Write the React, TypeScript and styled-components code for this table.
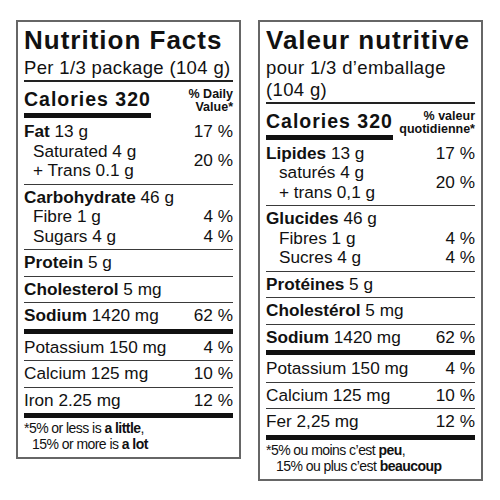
import styled, { createGlobalStyle } from "styled-components";

type Kind = "main" | "sub" | "plain";

interface Line {
  kind: Kind;
  name: string;
  amount: string;
  dv?: string;
}

interface Pair {
  kind: "pair";
  lines: [string, string];
  dv: string;
}

type Entry = Line | Pair;

interface Section {
  entries: Entry[];
  rule: "thin" | "thick";
}

interface Label {
  title: string;
  serving: string;
  dvHead: [string, string];
  sections: Section[];
  foot: [string, string, string][];
  indent: number;
  footIndent: number;
}

const EN: Label = {
  title: "Nutrition Facts",
  serving: "Per 1/3 package (104 g)",
  dvHead: ["% Daily", "Value*"],
  indent: 9,
  footIndent: 8,
  sections: [
    {
      rule: "thin",
      entries: [
        { kind: "main", name: "Fat", amount: "13 g", dv: "17 %" },
        { kind: "pair", lines: ["Saturated 4 g", "+ Trans 0.1 g"], dv: "20 %" },
      ],
    },
    {
      rule: "thin",
      entries: [
        { kind: "main", name: "Carbohydrate", amount: "46 g" },
        { kind: "sub", name: "Fibre", amount: "1 g", dv: "4 %" },
        { kind: "sub", name: "Sugars", amount: "4 g", dv: "4 %" },
      ],
    },
    { rule: "thin", entries: [{ kind: "main", name: "Protein", amount: "5 g" }] },
    { rule: "thin", entries: [{ kind: "main", name: "Cholesterol", amount: "5 mg" }] },
    {
      rule: "thick",
      entries: [{ kind: "main", name: "Sodium", amount: "1420 mg", dv: "62 %" }],
    },
    {
      rule: "thin",
      entries: [{ kind: "plain", name: "Potassium", amount: "150 mg", dv: "4 %" }],
    },
    {
      rule: "thin",
      entries: [{ kind: "plain", name: "Calcium", amount: "125 mg", dv: "10 %" }],
    },
    {
      rule: "thick",
      entries: [{ kind: "plain", name: "Iron", amount: "2.25 mg", dv: "12 %" }],
    },
  ],
  foot: [
    ["*5% or less is ", "a little", ","],
    ["15% or more is ", "a lot", ""],
  ],
};

const FR: Label = {
  title: "Valeur nutritive",
  serving: "pour 1/3 d\u2019emballage (104 g)",
  dvHead: ["% valeur", "quotidienne*"],
  indent: 13,
  footIndent: 10,
  sections: [
    {
      rule: "thin",
      entries: [
        { kind: "main", name: "Lipides", amount: "13 g", dv: "17 %" },
        { kind: "pair", lines: ["satur\u00e9s 4 g", "+ trans 0,1 g"], dv: "20 %" },
      ],
    },
    {
      rule: "thin",
      entries: [
        { kind: "main", name: "Glucides", amount: "46 g" },
        { kind: "sub", name: "Fibres", amount: "1 g", dv: "4 %" },
        { kind: "sub", name: "Sucres", amount: "4 g", dv: "4 %" },
      ],
    },
    { rule: "thin", entries: [{ kind: "main", name: "Prot\u00e9ines", amount: "5 g" }] },
    { rule: "thin", entries: [{ kind: "main", name: "Cholest\u00e9rol", amount: "5 mg" }] },
    {
      rule: "thick",
      entries: [{ kind: "main", name: "Sodium", amount: "1420 mg", dv: "62 %" }],
    },
    {
      rule: "thin",
      entries: [{ kind: "plain", name: "Potassium", amount: "150 mg", dv: "4 %" }],
    },
    {
      rule: "thin",
      entries: [{ kind: "plain", name: "Calcium", amount: "125 mg", dv: "10 %" }],
    },
    {
      rule: "thick",
      entries: [{ kind: "plain", name: "Fer", amount: "2,25 mg", dv: "12 %" }],
    },
  ],
  foot: [
    ["*5% ou moins c\u2019est ", "peu", ","],
    ["15% ou plus c\u2019est ", "beaucoup", ""],
  ],
};

export default function App() {
  return (
    <>
      <GlobalStyle />
      <Page>
        <NutritionPanel label={EN} />
        <NutritionPanel label={FR} />
      </Page>
    </>
  );
}

function NutritionPanel({ label }: { label: Label }) {
  return (
    <Panel>
      <Title>{label.title}</Title>
      <Serving>{label.serving}</Serving>
      <CaloriesRow>
        <Calories>Calories 320</Calories>
        <DvHead>
          {label.dvHead[0]}
          <br />
          {label.dvHead[1]}
        </DvHead>
      </CaloriesRow>
      {label.sections.map((section, i) => (
        <Block key={i} $rule={section.rule}>
          {section.entries.map((entry, j) =>
            entry.kind === "pair" ? (
              <PairRow key={j}>
                <PairLines $indent={label.indent}>
                  <div>{entry.lines[0]}</div>
                  <div>{entry.lines[1]}</div>
                </PairLines>
                <span>{entry.dv}</span>
              </PairRow>
            ) : (
              <Row key={j} $indent={entry.kind === "sub" ? label.indent : 0}>
                <span>
                  {entry.kind === "main" ? <Name>{entry.name}</Name> : entry.name}{" "}
                  {entry.amount}
                </span>
                {entry.dv && <span>{entry.dv}</span>}
              </Row>
            )
          )}
        </Block>
      ))}
      <Footnote>
        {label.foot.map(([before, strong, after], i) => (
          <FootLine key={i} $indent={i > 0 ? label.footIndent : 0}>
            {before}
            <strong>{strong}</strong>
            {after}
          </FootLine>
        ))}
      </Footnote>
    </Panel>
  );
}

const GlobalStyle = createGlobalStyle`
  html, body {
    margin: 0;
    background: #ffffff;
  }
  body {
    font-family: "Liberation Sans", Arial, sans-serif;
    color: #111111;
  }
`;

const Page = styled.div`
  display: flex;
  align-items: flex-start;
  gap: 17px;
  padding: 20px 0 0 16px;
`;

const Panel = styled.section`
  box-sizing: border-box;
  width: 225px;
  padding: 2px 6px 0;
  border: 2px solid #666666;
`;

const Title = styled.h1`
  margin: 0;
  font-size: 26px;
  line-height: 33px;
  font-weight: 700;
  letter-spacing: 1px;
  white-space: nowrap;
`;

const Serving = styled.div`
  padding-bottom: 1.5px;
  border-bottom: 2px solid #222222;
  font-size: 18.5px;
  line-height: 21.5px;
  letter-spacing: 0.35px;
`;

const CaloriesRow = styled.div`
  display: flex;
  justify-content: space-between;
  align-items: flex-start;
  padding-top: 6px;
  margin-bottom: 1px;
`;

const Calories = styled.div`
  padding-bottom: 3px;
  border-bottom: 5px solid #111111;
  font-size: 19.5px;
  line-height: 22px;
  font-weight: 700;
  letter-spacing: 1px;
  white-space: nowrap;
`;

const DvHead = styled.div`
  font-size: 12.5px;
  line-height: 13px;
  font-weight: 700;
  text-align: right;
  white-space: nowrap;
`;

const Block = styled.div<{ $rule: "thin" | "thick" }>`
  padding: 3px 0;
  font-size: 17.2px;
  line-height: 19.5px;
  border-bottom: ${(p) => (p.$rule === "thick" ? "5px solid #111111" : "1px solid #3a3a3a")};
  margin-bottom: ${(p) => (p.$rule === "thick" ? "1px" : "0")};
`;

const Row = styled.div<{ $indent: number }>`
  display: flex;
  justify-content: space-between;
  padding-left: ${(p) => p.$indent}px;
  white-space: nowrap;
`;

const PairRow = styled.div`
  display: flex;
  justify-content: space-between;
  align-items: center;
  white-space: nowrap;
`;

const PairLines = styled.div<{ $indent: number }>`
  padding-left: ${(p) => p.$indent}px;
`;

const Name = styled.b`
  font-weight: 700;
`;

const Footnote = styled.div`
  padding: 1px 0 5px;
  font-family: "Liberation Sans Narrow", "Liberation Sans", sans-serif;
  font-size: 14px;
  line-height: 16px;
  letter-spacing: -0.55px;
`;

const FootLine = styled.div<{ $indent: number }>`
  padding-left: ${(p) => p.$indent}px;
  white-space: nowrap;

  strong {
    font-weight: 700;
  }
`;
